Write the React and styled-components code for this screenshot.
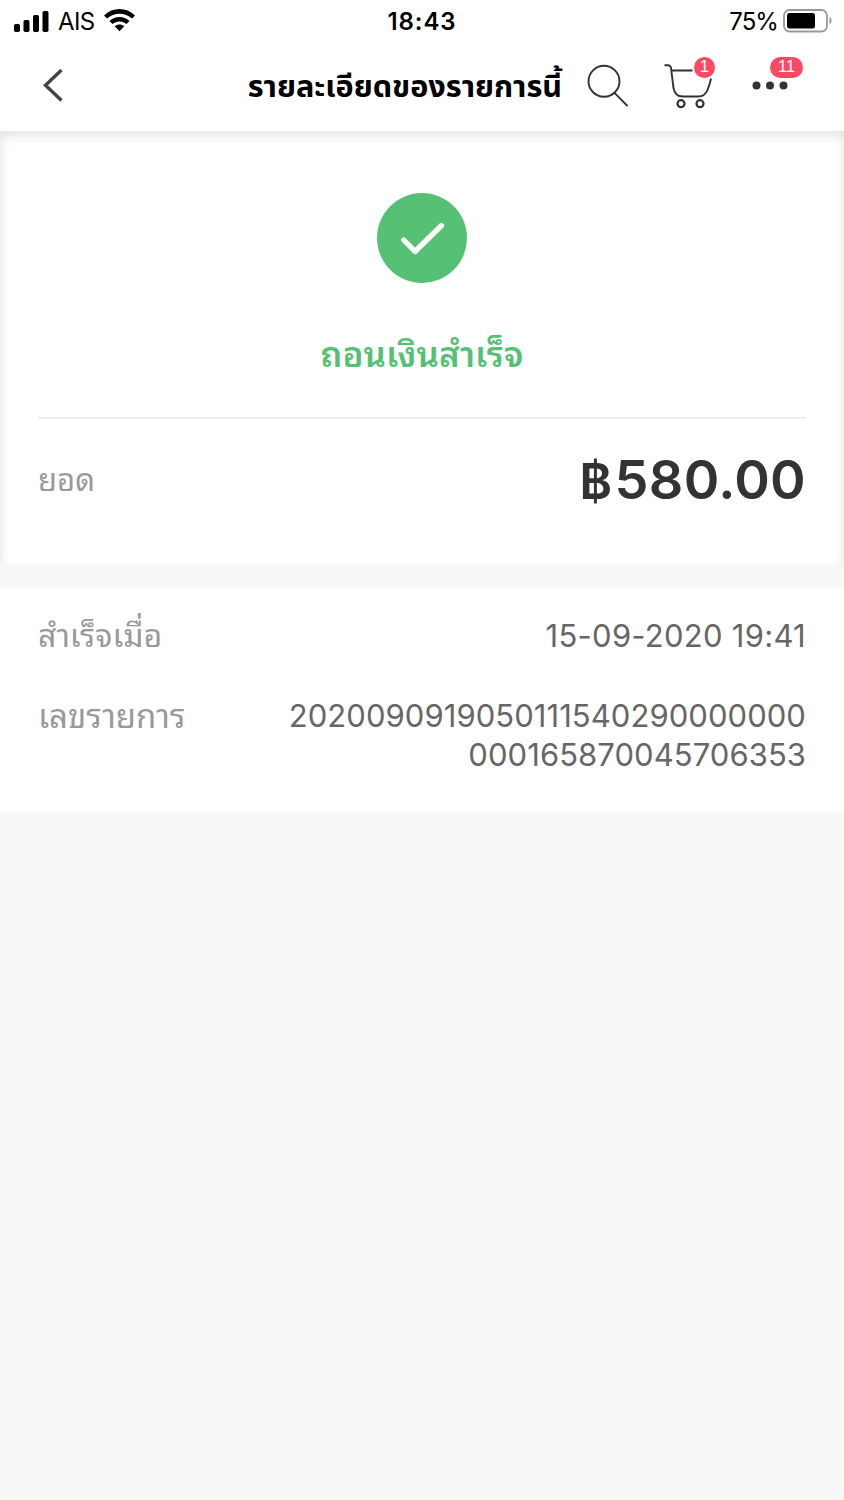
import React from "react";
import styled, { createGlobalStyle } from "styled-components";

const Global = createGlobalStyle`
  * { box-sizing: border-box; }
  body { margin: 0; background: #f8f8f8; font-family: Inter, "Noto Sans Thai", "Noto Sans", "Liberation Sans", sans-serif; }
`;

const looped = `Inter, "Noto Sans Thai Looped", "Noto Looped Thai", Loma, Sarabun, Waree, Garuda, "Noto Sans", sans-serif`;

const Screen = styled.main`
  width: 844px;
  min-height: 1500px;
  background: #f8f8f8;
`;

const StatusBar = styled.div`
  height: 43px;
  padding: 0 12px 0 14px;
  background: #fff;
  color: #000;
  display: grid;
  grid-template-columns: 1fr auto 1fr;
  align-items: center;
  font-size: 24px;
`;

const StatusGroup = styled.div`
  display: flex;
  align-items: center;
  justify-content: ${(p) => (p.$end ? "flex-end" : "flex-start")};
  gap: ${(p) => p.$gap}px;
  svg { display: block; flex: none; }
`;

const Carrier = styled.span`
  letter-spacing: -0.6px;
`;

const Charge = styled.span`
  letter-spacing: -0.9px;
`;

const Clock = styled.time`
  font-weight: 600;
  letter-spacing: 0.9px;
  margin-right: 2px;
`;

const NavBar = styled.header`
  height: 88px;
  background: #fff;
  display: flex;
  align-items: center;
  padding: 0 38px 3px 42px;
  svg { display: block; }
`;

const IconButton = styled.button`
  position: relative;
  flex: none;
  width: ${(p) => p.$w}px;
  height: 60px;
  padding: 0;
  border: 0;
  background: none;
  display: flex;
  align-items: center;
`;

const Title = styled.h1`
  flex: 1;
  margin: 0;
  padding-right: 25px;
  text-align: right;
  white-space: nowrap;
  font-size: 30.6px;
  font-weight: 700;
  line-height: 44px;
  color: #000;
`;

const Badge = styled.span`
  position: absolute;
  top: 1.5px;
  left: ${(p) => p.$left}px;
  width: ${(p) => p.$w}px;
  height: 21px;
  border-radius: 11px;
  background: #ff4861;
  color: #fff;
  font-family: "Liberation Sans", sans-serif;
  font-size: 17px;
  line-height: 20px;
  text-align: center;
`;

const Summary = styled.section`
  height: 434px;
  padding: 62px 38px 0;
  background: #fff;
  box-shadow: inset 0 5px 12px rgba(0, 0, 0, 0.11);
  display: flex;
  flex-direction: column;
`;

const Result = styled.div`
  height: 226px;
  border-bottom: 2px solid #ececec;
  display: flex;
  flex-direction: column;
  align-items: center;
  svg { display: block; }
`;

const ResultText = styled.h2`
  margin: 47px 0 0;
  font-family: ${looped};
  font-size: 35px;
  line-height: 48px;
  font-weight: 600;
  color: #56c174;
`;

const Row = styled.div`
  display: flex;
  justify-content: space-between;
  align-items: ${(p) => p.$align || "flex-start"};
  margin-top: ${(p) => p.$top}px;
`;

const Label = styled.span`
  font-family: ${looped};
  font-size: ${(p) => p.$size || 32.2}px;
  line-height: 40px;
  color: #999;
`;

const Amount = styled.strong`
  font-size: 54px;
  line-height: 60px;
  font-weight: 600;
  letter-spacing: 0.3px;
  color: #333;
`;

const Currency = styled.span`
  font-size: 50px;
  line-height: 1;
  margin-right: 2px;
`;

const Details = styled.section`
  margin-top: 23px;
  height: 224px;
  padding: 27.6px 38px 0;
  background: #fff;
`;

const Value = styled.span`
  width: ${(p) => p.$w}px;
  font-size: 31px;
  line-height: 39px;
  letter-spacing: ${(p) => p.$track}px;
  text-align: right;
  color: #666;
  overflow-wrap: anywhere;
`;

const Signal = () => (
  <svg width="35" height="22" viewBox="0 0 35 22">
    <rect x="0" y="13" width="6" height="8" rx="1.7" />
    <rect x="9.5" y="9" width="6" height="12" rx="1.7" />
    <rect x="19" y="4" width="6" height="17" rx="1.7" />
    <rect x="28.5" y="0" width="6" height="21" rx="1.7" />
  </svg>
);

const Wifi = () => (
  <svg width="31" height="25" viewBox="0 0 31 25">
    <path d="M0 6.5C8.500 -2.100 22.500 -2.100 31 6.500L28 9.500C21 3 10 3 3 9.500Z" />
    <path d="M5.500 12C11.200 6.500 19.800 6.500 25.500 12L22.500 15C18.500 11.500 12.500 11.500 8.500 15Z" />
    <path d="M10.700 17.300C13.500 14.900 17.500 14.900 20.300 17.300L15.500 22.300Z" />
  </svg>
);

const Battery = () => (
  <svg width="49" height="26" viewBox="0 0 49 26">
    <rect x="1" y="1" width="43" height="21.500" rx="5.500" fill="none" stroke="#999" strokeWidth="1.800" />
    <rect x="4" y="4" width="28" height="15.500" rx="2.500" />
    <path d="M46.500 8v7c2.700-.8 2.700-6.200 0-7Z" fill="#999" />
  </svg>
);

const Back = () => (
  <svg width="22" height="36" viewBox="0 0 22 36" fill="none" stroke="#444" strokeWidth="3.400">
    <path d="M19.500 2L3.500 17.300L19.500 32.500" />
  </svg>
);

const Search = () => (
  <svg width="42" height="44" viewBox="0 0 42 44" fill="none" stroke="#333" strokeWidth="1.900">
    <circle cx="17" cy="17.300" r="15.500" />
    <path d="M27.500 28.800L40 41.500" strokeLinecap="round" />
  </svg>
);

const Cart = () => (
  <svg width="50" height="46" viewBox="0 0 50 46" fill="none" stroke="#333" strokeWidth="1.900">
    <path d="M.5 2.200H4Q6.500 2.200 7 5L9.500 25Q11 33.500 18.500 33.500H34Q41 33.500 43.500 27Q46 21 47 15.500M7.500 7.500H28.500" />
    <circle cx="17" cy="40.700" r="3.500" strokeWidth="2.200" />
    <circle cx="36" cy="40.700" r="3.500" strokeWidth="2.200" />
  </svg>
);

const Dots = () => (
  <svg width="36" height="12" viewBox="0 0 36 12" fill="#333">
    <circle cx="4.500" cy="5.500" r="4" />
    <circle cx="18" cy="5.500" r="4" />
    <circle cx="31.500" cy="5.500" r="4" />
  </svg>
);

const Check = () => (
  <svg width="90" height="90" viewBox="0 0 90 90">
    <circle cx="45" cy="45" r="45" fill="#56c174" />
    <path d="M26.800 47L38 58.500L64.500 32.500" fill="none" stroke="#fff" strokeWidth="5.300" strokeLinecap="round" strokeLinejoin="round" />
  </svg>
);

export default function App() {
  return (
    <>
      <Global />
      <Screen>
        <StatusBar>
          <StatusGroup $gap={9}>
            <Signal />
            <Carrier>AIS</Carrier>
            <Wifi />
          </StatusGroup>
          <Clock>18:43</Clock>
          <StatusGroup $end $gap={5}>
            <Charge>75%</Charge>
            <Battery />
          </StatusGroup>
        </StatusBar>
        <NavBar>
          <IconButton $w={22} aria-label="ย้อนกลับ"><Back /></IconButton>
          <Title>รายละเอียดของรายการนี้</Title>
          <IconButton $w={77} aria-label="ค้นหา"><Search /></IconButton>
          <IconButton $w={88} aria-label="รถเข็น">
            <Cart />
            <Badge $left={30} $w={21}>1</Badge>
          </IconButton>
          <IconButton $w={54} aria-label="เพิ่มเติม">
            <Dots />
            <Badge $left={18} $w={33}>11</Badge>
          </IconButton>
        </NavBar>
        <Summary>
          <Result>
            <Check />
            <ResultText>ถอนเงินสำเร็จ</ResultText>
          </Result>
          <Row $top={31} $align="center">
            <Label $size={31}>ยอด</Label>
            <Amount><Currency>฿</Currency>580.00</Amount>
          </Row>
        </Summary>
        <Details>
          <Row $top={0}>
            <Label $size={32}>สำเร็จเมื่อ</Label>
            <Value $w={400} $track={0.27}>15-09-2020 19:41</Value>
          </Row>
          <Row $top={40}>
            <Label $size={33}>เลขรายการ</Label>
            <Value $w={525} $track={0.06}>2020090919050111540290000000000165870045706353</Value>
          </Row>
        </Details>
      </Screen>
    </>
  );
}
